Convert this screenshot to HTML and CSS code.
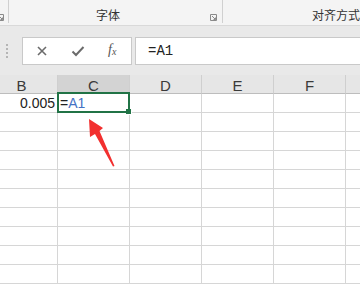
FILE: index.html
```html
<!DOCTYPE html>
<html>
<head>
<meta charset="utf-8">
<link rel="stylesheet" href="styles.css">
</head>
<body>
<div class="app">
  <div class="ribbon">
    <div class="group g1">
      <span class="launcher"><svg width="7" height="7" viewBox="0 0 7 7"><path d="M0.5 0.5h6v6h-6z M2 2l3.5 3.5 M5.5 3.5v2h-2" fill="none" stroke="#8a8a8a" stroke-width="1"/></svg></span>
    </div>
    <div class="group g2">
      <span class="glabel">字体</span>
      <span class="launcher"><svg width="7" height="7" viewBox="0 0 7 7"><path d="M0.5 0.5h6v6h-6z M2 2l3.5 3.5 M5.5 3.5v2h-2" fill="none" stroke="#8a8a8a" stroke-width="1"/></svg></span>
    </div>
    <div class="group g3">
      <span class="glabel">对齐方式</span>
    </div>
  </div>
  <div class="fbar">
    <div class="grip"><i></i><i></i><i></i><i></i></div>
    <div class="fbtns">
      <svg class="ic" width="12" height="12" viewBox="0 0 12 12"><path d="M2 2L10 10M10 2L2 10" stroke="#6b6b6b" stroke-width="1.6" fill="none"/></svg>
      <svg class="ic" width="14" height="12" viewBox="0 0 14 12"><path d="M1.5 6.5L5 10L12.5 2" stroke="#6b6b6b" stroke-width="2" fill="none"/></svg>
      <span class="fx">f<sub>x</sub></span>
    </div>
    <div class="finput">=A1</div>
  </div>
  <div class="sheet">
    <div class="row head">
      <div class="cell">B</div>
      <div class="cell sel">C</div>
      <div class="cell">D</div>
      <div class="cell">E</div>
      <div class="cell">F</div>
      <div class="cell"></div>
    </div>
    <div class="row">
      <div class="cell num">0.005</div>
      <div class="cell active"><span class="eq">=</span><span class="ref">A1</span><span class="handle"></span></div>
      <div class="cell"></div><div class="cell"></div><div class="cell"></div><div class="cell"></div>
    </div>
    <div class="row"><div class="cell"></div><div class="cell"></div><div class="cell"></div><div class="cell"></div><div class="cell"></div><div class="cell"></div></div>
    <div class="row"><div class="cell"></div><div class="cell"></div><div class="cell"></div><div class="cell"></div><div class="cell"></div><div class="cell"></div></div>
    <div class="row"><div class="cell"></div><div class="cell"></div><div class="cell"></div><div class="cell"></div><div class="cell"></div><div class="cell"></div></div>
    <div class="row"><div class="cell"></div><div class="cell"></div><div class="cell"></div><div class="cell"></div><div class="cell"></div><div class="cell"></div></div>
    <div class="row"><div class="cell"></div><div class="cell"></div><div class="cell"></div><div class="cell"></div><div class="cell"></div><div class="cell"></div></div>
    <div class="row"><div class="cell"></div><div class="cell"></div><div class="cell"></div><div class="cell"></div><div class="cell"></div><div class="cell"></div></div>
    <div class="row"><div class="cell"></div><div class="cell"></div><div class="cell"></div><div class="cell"></div><div class="cell"></div><div class="cell"></div></div>
    <div class="row"><div class="cell"></div><div class="cell"></div><div class="cell"></div><div class="cell"></div><div class="cell"></div><div class="cell"></div></div>
    <div class="row"><div class="cell"></div><div class="cell"></div><div class="cell"></div><div class="cell"></div><div class="cell"></div><div class="cell"></div></div>
  </div>
  <svg class="arrow" width="360" height="290" viewBox="0 0 360 290"><polygon points="89,119 103,128 99.5,131 114.5,166 113,166.5 95,134 90,137" fill="#f2302f"/></svg>
</div>
</body>
</html>
```
FILE: styles.css
```css
html, body {
  margin: 0;
  padding: 0;
}
body {
  width: 360px;
  height: 290px;
  overflow: hidden;
  background: #ffffff;
  font-family: "Liberation Sans", "Noto Sans CJK SC", sans-serif;
}
.app {
  position: relative;
  width: 360px;
  height: 290px;
  overflow: hidden;
}
.ribbon {
  display: flex;
  height: 25px;
  background: #f4f4f4;
  border-bottom: 1px solid #d9d9d9;
}
.group {
  display: flex;
  align-items: flex-start;
  height: 23px;
  border-right: 1px solid #d0d0d0;
  box-sizing: border-box;
}
.g1 {
  width: 9px;
}
.g1 .launcher {
  margin-left: -3px;
}
.g2 {
  width: 214px;
}
.g2 .glabel {
  margin-left: 87px;
}
.g2 .launcher {
  margin-left: auto;
  margin-right: 5px;
}
.g3 {
  flex: 1;
  border-right: none;
}
.g3 .glabel {
  margin-left: 89px;
}
.glabel {
  font-family: "Noto Sans CJK SC", sans-serif;
  font-size: 12px;
  line-height: 14px;
  padding-top: 8px;
  color: #333;
  white-space: nowrap;
}
.launcher {
  display: flex;
  padding-top: 14px;
}
.fbar {
  display: flex;
  align-items: flex-start;
  height: 49px;
  padding-top: 11px;
  box-sizing: border-box;
  background: #e9e9e9;
}
.grip {
  display: flex;
  flex-direction: column;
  gap: 2px;
  width: 22px;
  padding-top: 7px;
  align-items: flex-start;
  padding-left: 6px;
  box-sizing: border-box;
}
.grip i {
  display: block;
  width: 2px;
  height: 2px;
  background: #b5b5b5;
}
.fbtns {
  display: flex;
  align-items: center;
  width: 110px;
  height: 28px;
  background: #fff;
  border: 1px solid #c9c9c9;
  box-sizing: border-box;
  padding-left: 13px;
  gap: 0;
}
.fbtns .ic:first-child {
  margin-right: 23px;
}
.fbtns .ic:nth-child(2) {
  margin-right: 23px;
}
.fx {
  font-family: "Liberation Serif", serif;
  font-style: italic;
  font-size: 14px;
  color: #555;
  line-height: 14px;
}
.fx sub {
  font-size: 10px;
  vertical-align: -1px;
}
.finput {
  margin-left: 3px;
  flex: 1;
  height: 28px;
  background: #fff;
  border: 1px solid #c9c9c9;
  border-right: none;
  box-sizing: border-box;
  font-family: "Liberation Mono", monospace;
  font-size: 14px;
  line-height: 26px;
  padding-left: 12px;
  color: #222;
}
.sheet {
  margin-left: -14px;
}
.row {
  display: flex;
  height: 19px;
}
.cell {
  position: relative;
  flex: 0 0 72px;
  height: 19px;
  box-sizing: border-box;
  border-right: 1px solid #d6d6d6;
  border-bottom: 1px solid #d6d6d6;
  font-size: 14px;
  line-height: 18px;
  color: #222;
}
.head .cell {
  background: #e6e6e6;
  border-bottom: 1px solid #bdbdbd;
  border-right: 1px solid #cfcfcf;
  text-align: center;
  font-size: 15px;
  line-height: 18px;
  padding-top: 2px;
  color: #3a3a3a;
}
.head .cell.sel {
  background: #d3d3d3;
}
.num {
  text-align: right;
  padding-right: 2px;
  color: #222;
}
.active {
  padding-left: 2px;
}
.active::after {
  content: "";
  position: absolute;
  left: -1px;
  top: -2px;
  right: -1px;
  bottom: -1px;
  border: 2px solid #217346;
}
.eq {
  color: #222;
}
.ref {
  color: #4472c4;
}
.handle {
  position: absolute;
  right: -3px;
  bottom: -3px;
  width: 5px;
  height: 5px;
  background: #217346;
  border: 1px solid #fff;
  border-top: none;
  border-left: none;
  z-index: 2;
}
.arrow {
  position: absolute;
  left: 0;
  top: 0;
  pointer-events: none;
}
```
